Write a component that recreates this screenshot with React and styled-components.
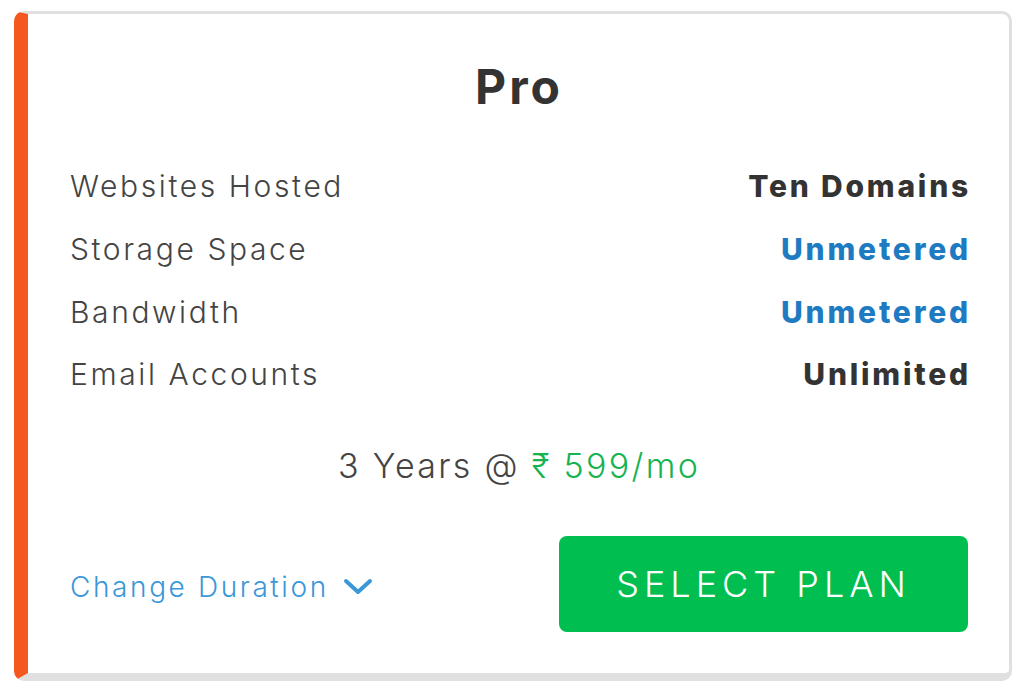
import React from 'react';
import styled, { createGlobalStyle } from 'styled-components';

const GlobalStyle = createGlobalStyle`
  body {
    margin: 0;
    background: #fff;
    font-family: Inter, "Noto Sans", sans-serif;
  }
`;

const features = [
  { label: 'Websites Hosted', value: 'Ten Domains', tone: 'dark' },
  { label: 'Storage Space', value: 'Unmetered', tone: 'blue' },
  { label: 'Bandwidth', value: 'Unmetered', tone: 'blue' },
  { label: 'Email Accounts', value: 'Unlimited', tone: 'dark' },
];

export default function App() {
  return (
    <>
      <GlobalStyle />
      <Page>
        <Card>
          <Title>Pro</Title>
          <FeatureList>
            {features.map((f, i) => (
              <FeatureRow key={i}>
                <Label>{f.label}</Label>
                <Value $tone={f.tone}>{f.value}</Value>
              </FeatureRow>
            ))}
          </FeatureList>
          <Price>
            3 Years @ <Amount>₹ 599/mo</Amount>
          </Price>
          <Footer>
            <DurationLink href="#">
              Change Duration
              <svg width="30" height="20" viewBox="0 0 30 20" fill="none">
                <path d="M3 4 L15 15 L27 4" stroke="#3a97d8" strokeWidth="4" strokeLinecap="round" strokeLinejoin="round" />
              </svg>
            </DurationLink>
            <SelectButton type="button">SELECT PLAN</SelectButton>
          </Footer>
        </Card>
      </Page>
    </>
  );
}

const Page = styled.div`
  padding: 11px 10px 12px 14px;
`;

const Card = styled.div`
  box-sizing: border-box;
  width: 998px;
  height: 670px;
  background: #fff;
  border: 3px solid #e0e0e0;
  border-bottom-width: 8px;
  border-left: 14px solid #f4581f;
  border-radius: 10px;
  padding: 40px 41px 0 42px;
  display: flex;
  flex-direction: column;
`;

const Title = styled.h2`
  margin: 0;
  text-align: center;
  font-size: 48px;
  font-weight: 700;
  letter-spacing: 3px;
  color: #333;
  line-height: 66px;
`;

const FeatureList = styled.div`
  margin-top: 35px;
  display: flex;
  flex-direction: column;
`;

const FeatureRow = styled.div`
  display: flex;
  justify-content: space-between;
  align-items: center;
  height: 62.7px;
`;

const Label = styled.span`
  font-size: 30px;
  font-weight: 300;
  letter-spacing: 2.6px;
  color: #444;
`;

const Value = styled.span`
  font-size: 30px;
  font-weight: 800;
  letter-spacing: 2.8px;
  margin-right: -3px;
  color: ${(p) => (p.$tone === 'blue' ? '#1f7bc1' : '#333')};
`;

const Price = styled.div`
  margin-top: 39px;
  text-align: center;
  font-size: 34px;
  font-weight: 300;
  letter-spacing: 2.3px;
  color: #444;
`;

const Amount = styled.span`
  color: #16b350;
`;

const Footer = styled.div`
  margin-top: 50px;
  display: flex;
  justify-content: space-between;
  align-items: center;
`;

const DurationLink = styled.a`
  display: flex;
  align-items: center;
  gap: 14px;
  padding-top: 6px;
  font-size: 28px;
  font-weight: 300;
  letter-spacing: 2.6px;
  color: #3a97d8;
  text-decoration: none;
`;

const SelectButton = styled.button`
  width: 409px;
  height: 96px;
  border: none;
  border-radius: 8px;
  background: #00bf50;
  color: #fff;
  font-family: inherit;
  font-size: 36px;
  font-weight: 300;
  letter-spacing: 5px;
  cursor: pointer;
`;
